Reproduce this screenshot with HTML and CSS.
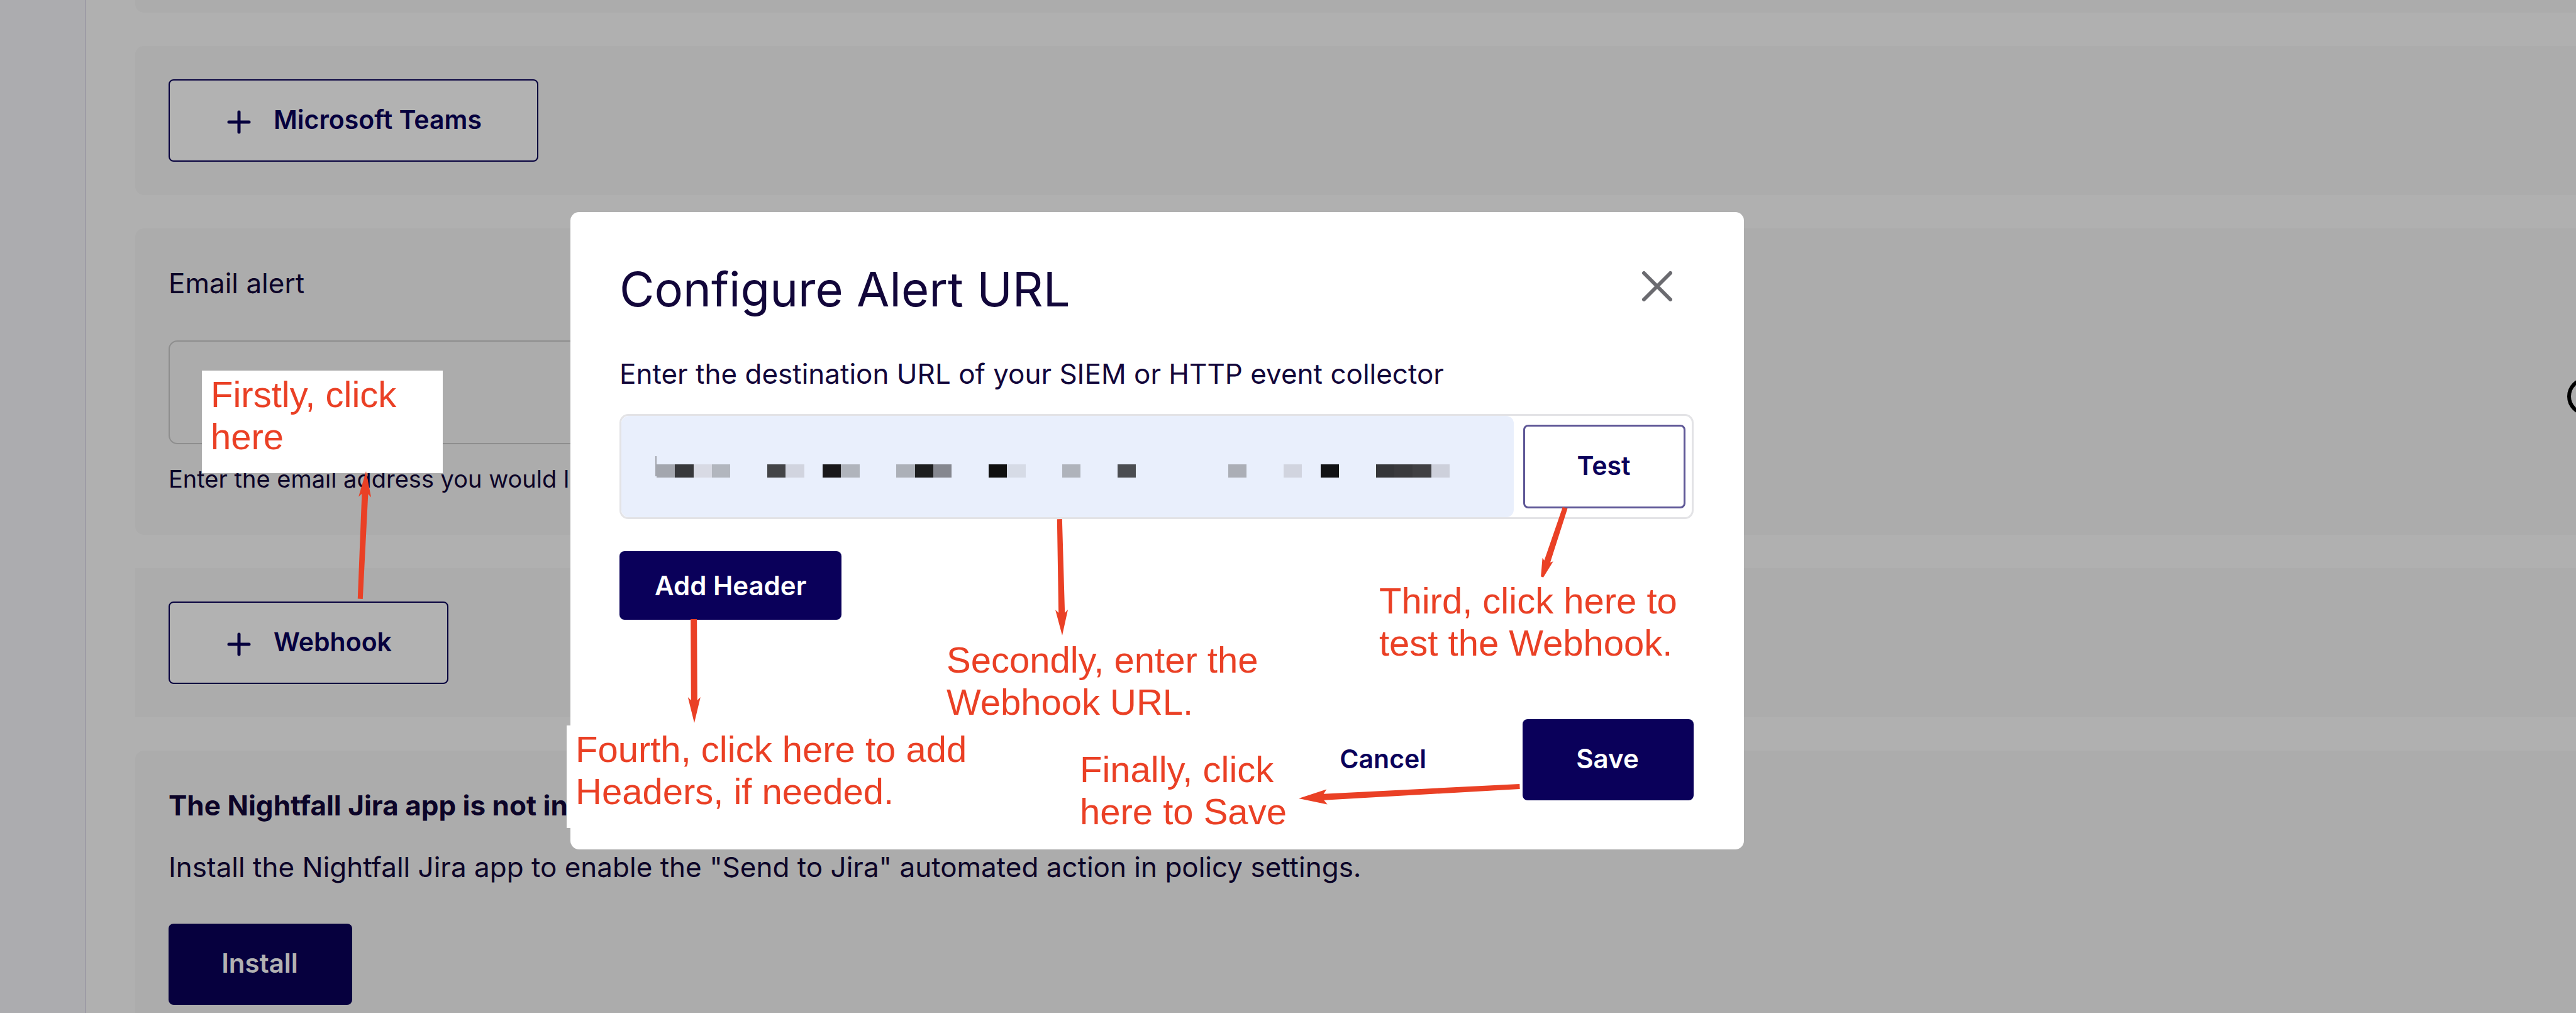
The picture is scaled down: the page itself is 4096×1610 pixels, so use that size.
FILE: index.html
```
<!DOCTYPE html>
<html lang="en">
<head>
<meta charset="utf-8">
<meta name="viewport" content="width=device-width, initial-scale=1">
<title>Configure Alert URL</title>
<link rel="stylesheet" href="styles.css">
</head>
<body>
<div class="app">
  <aside class="sidebar"></aside>
  <main class="content">
    <section class="card card-end"></section>

    <section class="card">
      <button type="button" class="btn btn-outline btn-icon">
        <svg class="plus" viewBox="0 0 48 48" aria-hidden="true"><path d="M24 12v32M8 28h32"/></svg>
        Microsoft Teams
      </button>
    </section>

    <section class="card">
      <label class="text" for="email">Email alert</label>
      <div class="email-row">
        <input class="email-input" id="email" type="email" aria-describedby="email-help">
        <svg class="help" viewBox="0 0 60 60" aria-hidden="true"><circle cx="30" cy="30" r="27"/></svg>
      </div>
      <p class="help-text" id="email-help">Enter the email address you would like to send alerts to</p>
    </section>

    <section class="card card-square">
      <button type="button" class="btn btn-outline btn-icon">
        <svg class="plus" viewBox="0 0 48 48" aria-hidden="true"><path d="M24 12v32M8 28h32"/></svg>
        Webhook
      </button>
    </section>

    <section class="card">
      <h2 class="text text-bold">The Nightfall Jira app is not installed</h2>
      <p class="text text-gap">Install the Nightfall Jira app to enable the "Send to Jira" automated action in policy settings.</p>
      <button type="button" class="btn btn-primary btn-install">Install</button>
    </section>
  </main>
</div>

<div class="overlay">
  <div class="modal" role="dialog" aria-modal="true" aria-labelledby="modal-title">
    <header class="modal-header">
      <h1 class="modal-title" id="modal-title">Configure Alert URL</h1>
      <button type="button" class="close" aria-label="Close">
        <svg class="close-icon" viewBox="0 0 48 48" aria-hidden="true"><path d="M3 3l42 42M45 3L3 45"/></svg>
      </button>
    </header>
    <label class="text modal-label" for="url">Enter the destination URL of your SIEM or HTTP event collector</label>
    <div class="url-field">
      <div class="url-box">
        <input class="url-input" id="url" type="url">
        <span class="caret"></span>
        <svg class="mosaic" viewBox="0 0 43 1" preserveAspectRatio="none" shape-rendering="crispEdges" aria-hidden="true">
          <rect x="0" width="1" height="1" fill="#a3a6ae"/>
          <rect x="1" width="1" height="1" fill="#37383b"/>
          <rect x="2" width="1" height="1" fill="#d8dae4"/>
          <rect x="3" width="1" height="1" fill="#b2b6be"/>
          <rect x="6" width="1" height="1" fill="#434447"/>
          <rect x="7" width="1" height="1" fill="#d1d4df"/>
          <rect x="9" width="1" height="1" fill="#19181a"/>
          <rect x="10" width="1" height="1" fill="#b0b4bc"/>
          <rect x="13" width="1" height="1" fill="#acb0b8"/>
          <rect x="14" width="1" height="1" fill="#1d1e1f"/>
          <rect x="15" width="1" height="1" fill="#85878f"/>
          <rect x="18" width="1" height="1" fill="#0f0f0f"/>
          <rect x="19" width="1" height="1" fill="#d6dbe6"/>
          <rect x="22" width="1" height="1" fill="#afb3bb"/>
          <rect x="25" width="1" height="1" fill="#4b4d51"/>
          <rect x="31" width="1" height="1" fill="#abaeb6"/>
          <rect x="34" width="1" height="1" fill="#d1d4df"/>
          <rect x="36" width="1" height="1" fill="#111214"/>
          <rect x="39" width="1" height="1" fill="#353639"/>
          <rect x="40" width="1" height="1" fill="#3a3a3d"/>
          <rect x="41" width="1" height="1" fill="#404043"/>
          <rect x="42" width="1" height="1" fill="#cdd0db"/>
        </svg>
      </div>
      <button type="button" class="btn btn-outline btn-test">Test</button>
    </div>
    <button type="button" class="btn btn-primary btn-small">Add Header</button>
    <footer class="modal-footer">
      <button type="button" class="btn btn-ghost">Cancel</button>
      <button type="button" class="btn btn-primary btn-save">Save</button>
    </footer>
  </div>
</div>

<div class="notes">
  <p class="note note-boxed note-first">Firstly, click<br>here</p>
  <p class="note note-second">Secondly, enter the<br>Webhook URL.</p>
  <p class="note note-third">Third, click here to<br>test the Webhook.</p>
  <p class="note note-boxed note-fourth">Fourth, click here to add<br>Headers, if needed.</p>
  <p class="note note-final">Finally, click<br>here to Save</p>
  <svg class="arrows" aria-hidden="true">
    <path transform="translate(582 749) rotate(2.6)" d="M0 0L10 41L5 36L4 203H-4L-5 36L-10 41Z"/>
    <path transform="translate(1689 1010) rotate(178.7)" d="M0 0L10 41L5 36L4 185H-4L-5 36L-10 41Z"/>
    <path transform="translate(2452 917) rotate(198.4)" d="M2 0L9 29L5 26L4 116H-4L-5 26L-9 29L-2 0Z"/>
    <path transform="translate(1104 1149) rotate(179.7)" d="M0 0L10 41L5 36L5 165H-5L-5 36L-10 41Z"/>
    <path transform="translate(2065 1269) rotate(266.9)" d="M0 0L12 45L5 40L4 352H-4L-5 40L-12 45Z"/>
  </svg>
</div>
</body>
</html>
```
FILE: styles.css
```
* {
  box-sizing: border-box;
}

body {
  margin: 0;
  height: 100vh;
  overflow: hidden;
  background: #fdfdfd;
  color: #12063a;
  font-family: Inter, "Liberation Sans", sans-serif;
  font-size: 44px;
  line-height: 68px;
}

h1, h2, p {
  margin: 0;
}

.app {
  display: flex;
  min-height: 100vh;
}

.sidebar {
  flex: 0 0 137px;
  background: #f7f7fb;
  border-right: 2px solid #e2e0ec;
}

.content {
  flex: 1;
  min-width: 0;
  display: flex;
  flex-direction: column;
  gap: 53px;
  padding-left: 78px;
}

/* Settings cards */
.card {
  padding: 53px 0 53px 53px;
  background: #f6f6f6;
  border-radius: 14px 0 0 14px;
  display: flex;
  flex-direction: column;
  align-items: flex-start;
}

.card-end {
  height: 20px;
  padding: 0;
  border-radius: 0 0 0 14px;
}

.card-square {
  border-radius: 0;
}

.text {
  font-size: 44px;
  font-weight: 400;
  line-height: 68px;
}

.text-bold {
  font-weight: 700;
}

.text-gap {
  margin: 30px 0 56px;
}

.email-row {
  align-self: stretch;
  display: flex;
  align-items: center;
  justify-content: space-between;
  margin: 57px -46px 19px 0;
}

.email-input {
  width: 40%;
  height: 165px;
  padding: 0 40px;
  border: 2px solid #ccc;
  border-radius: 14px;
  background: transparent;
  font: inherit;
}

.help {
  width: 60px;
  height: 60px;
  margin-top: 12px;
  fill: none;
  stroke: #000;
  stroke-width: 6;
}

.help-text {
  font-size: 38px;
  line-height: 72px;
}

/* Buttons */
.btn {
  display: inline-flex;
  align-items: center;
  justify-content: center;
  height: 131px;
  padding: 0 88px 4px 86px;
  border: 2px solid transparent;
  border-radius: 8px;
  background: transparent;
  color: #0a005a;
  font: 600 41px/68px Inter, "Liberation Sans", sans-serif;
  white-space: nowrap;
}

.btn-icon {
  gap: 31px;
}

.btn-outline {
  border-color: #0a005a;
  background: #fff;
}

.btn-primary {
  height: 129px;
  background: #0a005a;
  color: #fff;
  font-size: 42px;
}

.btn-install {
  width: 292px;
}

.btn-save {
  width: 272px;
}

.btn-small {
  height: 109px;
  padding: 0 54px;
}

.btn-ghost {
  height: 129px;
  padding: 0 75px 4px;
}

.plus {
  width: 48px;
  height: 48px;
  fill: none;
  stroke: #0a005a;
  stroke-width: 5;
  stroke-linecap: round;
}

/* Dialog */
.overlay {
  position: fixed;
  inset: 0;
  padding: 337px 0 0 907px;
  background: rgba(0, 0, 0, 0.3);
}

.modal {
  width: 1866px;
  padding: 76px 80px 78px 78px;
  border-radius: 14px;
  background: #fff;
}

.modal-header {
  display: flex;
  align-items: flex-start;
  justify-content: space-between;
}

.modal-title {
  font-size: 76px;
  font-weight: 400;
  line-height: 92px;
}

.close {
  display: flex;
  align-items: center;
  justify-content: center;
  width: 116px;
  height: 84px;
  padding: 0;
  border: 0;
  background: none;
}

.close-icon {
  width: 48px;
  height: 48px;
  fill: none;
  stroke: #6b6b70;
  stroke-width: 6;
  stroke-linecap: round;
}

.modal-label {
  display: block;
  margin: 55px 0 30px;
}

.url-field {
  display: flex;
  align-items: center;
  height: 167px;
  padding-right: 10px;
  margin-bottom: 51px;
  border: 3px solid #e3e3e6;
  border-radius: 14px;
}

.url-box {
  position: relative;
  flex: 1;
  align-self: stretch;
  margin-right: 15px;
}

.url-input {
  display: block;
  width: 100%;
  height: 100%;
  padding: 0 54px;
  border: 0;
  border-radius: 12px;
  background: #e9effc;
  font: inherit;
}

.caret {
  position: absolute;
  left: 54px;
  top: 64px;
  width: 2px;
  height: 32px;
  background: #a3a6ae;
}

.mosaic {
  position: absolute;
  left: 56px;
  top: 77px;
  width: 1261px;
  height: 21px;
}

.btn-test {
  width: 258px;
  height: 133px;
  border: 3px solid #5f5897;
}

.modal-footer {
  display: flex;
  justify-content: flex-end;
  gap: 76px;
  margin-top: 158px;
}

/* Tutorial notes drawn over the page */
.notes {
  position: absolute;
  inset: 0;
  color: #ea4025;
  pointer-events: none;
}

.note {
  position: absolute;
  padding: 4px 14px;
  font: 58px/67px "Liberation Sans", Arial, sans-serif;
  white-space: nowrap;
}

.note-boxed {
  height: 163px;
  background: #fff;
}

.note-first {
  left: 321px;
  top: 589px;
  width: 383px;
}

.note-second {
  left: 1491px;
  top: 1011px;
}

.note-third {
  left: 2179px;
  top: 917px;
}

.note-fourth {
  left: 901px;
  top: 1153px;
}

.note-final {
  left: 1703px;
  top: 1185px;
}

.arrows {
  position: absolute;
  inset: 0;
  width: 100%;
  height: 100%;
  fill: #ea4025;
}
```
